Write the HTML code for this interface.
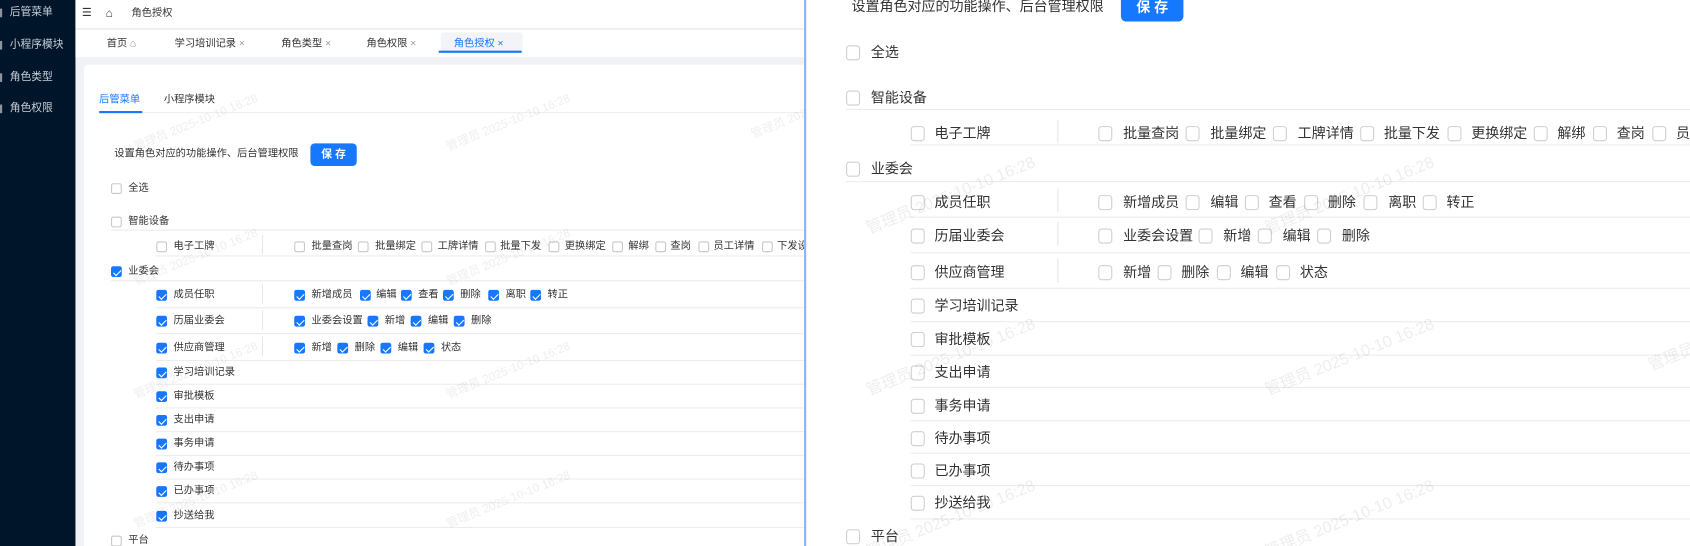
<!DOCTYPE html>
<html><head><meta charset="utf-8">
<style>
*{margin:0;padding:0;box-sizing:border-box}
body{width:1690px;height:546px;overflow:hidden;background:#fff;font-family:"Liberation Sans","Noto Sans CJK SC",sans-serif}
#w{position:absolute;left:0;top:0;width:1568px;height:507px;transform:scale(1.0778);transform-origin:0 0;overflow:hidden}
.a{position:absolute;white-space:nowrap}
#L{position:absolute;left:0;top:0;width:746px;height:507px;overflow:hidden;background:#f0f2f5}
#R{position:absolute;left:746px;top:0;width:822px;height:507px;overflow:hidden;background:#fff;border-left:2px solid #8fb4f5}
.l{font-size:9.5px;line-height:14px;color:#333}
.r{font-size:13px;line-height:18px;color:#333}
.cb{position:absolute;width:10px;height:10px;border:1px solid #c8c8c8;border-radius:2px;background:#fff}
.ck{background:#1677ff;border-color:#1677ff}
.ck:after{content:"";position:absolute;left:2.5px;top:0.5px;width:3px;height:5.5px;border:solid #fff;border-width:0 1.3px 1.3px 0;transform:rotate(45deg)}
.cr{position:absolute;width:13px;height:14px;border:1px solid #cfcfcf;border-radius:3px;background:#fff}
.hl{position:absolute;height:1px;background:#ececec}
.vl{position:absolute;width:1px;background:#e6e6e6}
.wm{position:absolute;color:rgba(0,0,0,0.07);transform:rotate(-22deg);white-space:nowrap;font-size:11px}
.wr{font-size:15px}
.side{font-size:10px;color:#c8ced8;line-height:14px}
</style></head><body><div id="w">
<div id="L">
 <div class="a" style="left:0;top:0;width:70px;height:507px;background:#001529"></div>
 <div class="a side" style="left:9px;top:5px">后管菜单</div>
 <div class="a side" style="left:9px;top:35px">小程序模块</div>
 <div class="a side" style="left:9px;top:65px">角色类型</div>
 <div class="a side" style="left:9px;top:94px">角色权限</div>
 <div class="a" style="left:0;top:8px;width:2px;height:8px;background:#8a93a0"></div>
 <div class="a" style="left:0;top:38px;width:2px;height:8px;background:#8a93a0"></div>
 <div class="a" style="left:0;top:68px;width:2px;height:8px;background:#8a93a0"></div>
 <div class="a" style="left:0;top:97px;width:2px;height:8px;background:#8a93a0"></div>
 <div class="a" style="left:70px;top:0;width:676px;height:27px;background:#fff;border-bottom:1px solid #eee"></div>
 <div class="a l" style="left:76px;top:6px;font-size:10px">☰</div>
 <div class="a l" style="left:98px;top:6px;font-size:11px">⌂</div>
 <div class="a l" style="left:122px;top:6px">角色授权</div>
 <div class="a" style="left:70px;top:28px;width:676px;height:25px;background:#fff"></div>
 <div class="a" style="left:409px;top:30px;width:76px;height:19px;background:#f2f4f7;border-radius:3px 3px 0 0"></div>
 <div class="a" style="left:407px;top:47px;width:77px;height:2px;background:#1677ff"></div>
 <div class="a l" style="left:99px;top:34px">首页 <span style="color:#888">⌂</span></div>
 <div class="a l" style="left:162px;top:34px">学习培训记录 <span style="color:#999">×</span></div>
 <div class="a l" style="left:261px;top:34px">角色类型 <span style="color:#999">×</span></div>
 <div class="a l" style="left:340px;top:34px">角色权限 <span style="color:#999">×</span></div>
 <div class="a l" style="left:421px;top:34px;color:#1677ff">角色授权 <span>×</span></div>
 <div class="a" style="left:78px;top:60px;width:680px;height:460px;background:#fff;border-radius:4px"></div>
 <div class="a l" style="left:92px;top:86px;color:#1677ff">后管菜单</div>
 <div class="a l" style="left:152px;top:86px">小程序模块</div>
 <div class="hl" style="left:92px;top:104px;width:660px;background:#eee"></div>
 <div class="a" style="left:92px;top:103px;width:40px;height:2px;background:#1677ff"></div>
 <div class="a l" style="left:106px;top:136px">设置角色对应的功能操作、后台管理权限</div>
 <div class="a" style="left:288px;top:133px;width:43px;height:21px;background:#1677ff;border-radius:4px;color:#fff;font-size:10px;line-height:21px;text-align:center;font-weight:bold">保 存</div>

 <div class="cb" style="left:103px;top:170px"></div><div class="a l" style="left:119px;top:168px">全选</div>
 <div class="cb" style="left:103px;top:201px"></div><div class="a l" style="left:119px;top:199px">智能设备</div>
 <div class="hl" style="left:103px;top:213px;width:650px"></div>
 <div class="cb" style="left:145px;top:224px"></div><div class="a l" style="left:161px;top:222px">电子工牌</div>
 <div class="vl" style="left:243px;top:218px;height:18px"></div>
 <div class="cb" style="left:273px;top:224px"></div><div class="a l" style="left:289px;top:222px">批量查岗</div>
 <div class="cb" style="left:332px;top:224px"></div><div class="a l" style="left:348px;top:222px">批量绑定</div>
 <div class="cb" style="left:391px;top:224px"></div><div class="a l" style="left:406px;top:222px">工牌详情</div>
 <div class="cb" style="left:450px;top:224px"></div><div class="a l" style="left:464px;top:222px">批量下发</div>
 <div class="cb" style="left:509px;top:224px"></div><div class="a l" style="left:524px;top:222px">更换绑定</div>
 <div class="cb" style="left:568px;top:224px"></div><div class="a l" style="left:583px;top:222px">解绑</div>
 <div class="cb" style="left:608px;top:224px"></div><div class="a l" style="left:622px;top:222px">查岗</div>
 <div class="cb" style="left:648px;top:224px"></div><div class="a l" style="left:662px;top:222px">员工详情</div>
 <div class="cb" style="left:707px;top:224px"></div><div class="a l" style="left:721px;top:222px">下发设置</div>
 <div class="hl" style="left:145px;top:237px;width:610px"></div>
 <div class="cb ck" style="left:103px;top:247px"></div><div class="a l" style="left:119px;top:245px">业委会</div>
 <div class="hl" style="left:103px;top:260px;width:650px"></div>

 <div class="cb ck" style="left:145px;top:269px"></div><div class="a l" style="left:161px;top:267px">成员任职</div>
 <div class="vl" style="left:243px;top:264px;height:18px"></div>
 <div class="cb ck" style="left:273px;top:269px"></div><div class="a l" style="left:289px;top:267px">新增成员</div>
 <div class="cb ck" style="left:334px;top:269px"></div><div class="a l" style="left:349px;top:267px">编辑</div>
 <div class="cb ck" style="left:372px;top:269px"></div><div class="a l" style="left:388px;top:267px">查看</div>
 <div class="cb ck" style="left:411px;top:269px"></div><div class="a l" style="left:427px;top:267px">删除</div>
 <div class="cb ck" style="left:453px;top:269px"></div><div class="a l" style="left:469px;top:267px">离职</div>
 <div class="cb ck" style="left:492px;top:269px"></div><div class="a l" style="left:508px;top:267px">转正</div>
 <div class="hl" style="left:145px;top:285px;width:610px"></div>
 <div class="cb ck" style="left:145px;top:293px"></div><div class="a l" style="left:161px;top:291px">历届业委会</div>
 <div class="vl" style="left:243px;top:288px;height:18px"></div>
 <div class="cb ck" style="left:273px;top:293px"></div><div class="a l" style="left:289px;top:291px">业委会设置</div>
 <div class="cb ck" style="left:341px;top:293px"></div><div class="a l" style="left:357px;top:291px">新增</div>
 <div class="cb ck" style="left:381px;top:293px"></div><div class="a l" style="left:397px;top:291px">编辑</div>
 <div class="cb ck" style="left:421px;top:293px"></div><div class="a l" style="left:437px;top:291px">删除</div>
 <div class="hl" style="left:145px;top:309px;width:610px"></div>
 <div class="cb ck" style="left:145px;top:318px"></div><div class="a l" style="left:161px;top:316px">供应商管理</div>
 <div class="vl" style="left:243px;top:312px;height:18px"></div>
 <div class="cb ck" style="left:273px;top:318px"></div><div class="a l" style="left:289px;top:316px">新增</div>
 <div class="cb ck" style="left:313px;top:318px"></div><div class="a l" style="left:329px;top:316px">删除</div>
 <div class="cb ck" style="left:353px;top:318px"></div><div class="a l" style="left:369px;top:316px">编辑</div>
 <div class="cb ck" style="left:393px;top:318px"></div><div class="a l" style="left:409px;top:316px">状态</div>
 <div class="hl" style="left:145px;top:334px;width:610px"></div>
 <div class="cb ck" style="left:145px;top:341px"></div><div class="a l" style="left:161px;top:339px">学习培训记录</div>
 <div class="hl" style="left:145px;top:356px;width:610px"></div>
 <div class="cb ck" style="left:145px;top:363px"></div><div class="a l" style="left:161px;top:361px">审批模板</div>
 <div class="hl" style="left:145px;top:378px;width:610px"></div>
 <div class="cb ck" style="left:145px;top:385px"></div><div class="a l" style="left:161px;top:383px">支出申请</div>
 <div class="hl" style="left:145px;top:400px;width:610px"></div>
 <div class="cb ck" style="left:145px;top:407px"></div><div class="a l" style="left:161px;top:405px">事务申请</div>
 <div class="hl" style="left:145px;top:422px;width:610px"></div>
 <div class="cb ck" style="left:145px;top:429px"></div><div class="a l" style="left:161px;top:427px">待办事项</div>
 <div class="hl" style="left:145px;top:444px;width:610px"></div>
 <div class="cb ck" style="left:145px;top:451px"></div><div class="a l" style="left:161px;top:449px">已办事项</div>
 <div class="hl" style="left:145px;top:466px;width:610px"></div>
 <div class="cb ck" style="left:145px;top:474px"></div><div class="a l" style="left:161px;top:472px">抄送给我</div>
 <div class="hl" style="left:145px;top:489px;width:610px"></div>
 <div class="cb" style="left:103px;top:497px"></div><div class="a l" style="left:119px;top:495px">平台</div>

 <div class="wm" style="left:120px;top:105px">管理员 2025-10-10 16:28</div>
 <div class="wm" style="left:410px;top:105px">管理员 2025-10-10 16:28</div>
 <div class="wm" style="left:695px;top:105px">管理员 2025</div>
 <div class="wm" style="left:120px;top:335px">管理员 2025-10-10 16:28</div>
 <div class="wm" style="left:410px;top:335px">管理员 2025-10-10 16:28</div>
 <div class="wm" style="left:120px;top:230px">管理员 2025-10-10 16:28</div>
 <div class="wm" style="left:410px;top:230px">管理员 2025-10-10 16:28</div>
 <div class="wm" style="left:120px;top:455px">管理员 2025-10-10 16:28</div>
 <div class="wm" style="left:410px;top:455px">管理员 2025-10-10 16:28</div>
</div>

<div id="R">
 <div class="a r" style="left:42px;top:-3px">设置角色对应的功能操作、后台管理权限</div>
 <div class="a" style="left:292px;top:-8px;width:58px;height:28px;background:#1677ff;border-radius:5px;color:#fff;font-size:13px;line-height:30px;text-align:center;font-weight:bold">保 存</div>

 <div class="cr" style="left:37px;top:42px"></div><div class="a r" style="left:60px;top:40px">全选</div>
 <div class="cr" style="left:37px;top:84px"></div><div class="a r" style="left:60px;top:82px">智能设备</div>
 <div class="hl" style="left:37px;top:101px;width:790px"></div>
 <div class="cr" style="left:97px;top:117px"></div><div class="a r" style="left:119px;top:115px">电子工牌</div>
 <div class="vl" style="left:233px;top:111px;height:22px"></div>
 <div class="cr" style="left:271px;top:117px"></div><div class="a r" style="left:294px;top:115px">批量查岗</div>
 <div class="cr" style="left:352px;top:117px"></div><div class="a r" style="left:375px;top:115px">批量绑定</div>
 <div class="cr" style="left:433px;top:117px"></div><div class="a r" style="left:456px;top:115px">工牌详情</div>
 <div class="cr" style="left:514px;top:117px"></div><div class="a r" style="left:536px;top:115px">批量下发</div>
 <div class="cr" style="left:595px;top:117px"></div><div class="a r" style="left:617px;top:115px">更换绑定</div>
 <div class="cr" style="left:675px;top:117px"></div><div class="a r" style="left:697px;top:115px">解绑</div>
 <div class="cr" style="left:730px;top:117px"></div><div class="a r" style="left:752px;top:115px">查岗</div>
 <div class="cr" style="left:785px;top:117px"></div><div class="a r" style="left:807px;top:115px">员工详情</div>
 <div class="hl" style="left:97px;top:134px;width:730px"></div>
 <div class="cr" style="left:37px;top:150px"></div><div class="a r" style="left:60px;top:148px">业委会</div>
 <div class="hl" style="left:37px;top:168px;width:790px"></div>

 <div class="cr" style="left:97px;top:181px"></div><div class="a r" style="left:119px;top:179px">成员任职</div>
 <div class="vl" style="left:233px;top:175px;height:22px"></div>
 <div class="cr" style="left:271px;top:181px"></div><div class="a r" style="left:294px;top:179px">新增成员</div>
 <div class="cr" style="left:352px;top:181px"></div><div class="a r" style="left:375px;top:179px">编辑</div>
 <div class="cr" style="left:407px;top:181px"></div><div class="a r" style="left:429px;top:179px">查看</div>
 <div class="cr" style="left:462px;top:181px"></div><div class="a r" style="left:484px;top:179px">删除</div>
 <div class="cr" style="left:517px;top:181px"></div><div class="a r" style="left:540px;top:179px">离职</div>
 <div class="cr" style="left:572px;top:181px"></div><div class="a r" style="left:594px;top:179px">转正</div>
 <div class="hl" style="left:97px;top:201px;width:730px"></div>
 <div class="cr" style="left:97px;top:212px"></div><div class="a r" style="left:119px;top:210px">历届业委会</div>
 <div class="vl" style="left:233px;top:206px;height:22px"></div>
 <div class="cr" style="left:271px;top:212px"></div><div class="a r" style="left:294px;top:210px">业委会设置</div>
 <div class="cr" style="left:364px;top:212px"></div><div class="a r" style="left:387px;top:210px">新增</div>
 <div class="cr" style="left:419px;top:212px"></div><div class="a r" style="left:442px;top:210px">编辑</div>
 <div class="cr" style="left:474px;top:212px"></div><div class="a r" style="left:497px;top:210px">删除</div>
 <div class="hl" style="left:97px;top:234px;width:730px"></div>
 <div class="cr" style="left:97px;top:246px"></div><div class="a r" style="left:119px;top:244px">供应商管理</div>
 <div class="vl" style="left:233px;top:240px;height:22px"></div>
 <div class="cr" style="left:271px;top:246px"></div><div class="a r" style="left:294px;top:244px">新增</div>
 <div class="cr" style="left:326px;top:246px"></div><div class="a r" style="left:348px;top:244px">删除</div>
 <div class="cr" style="left:381px;top:246px"></div><div class="a r" style="left:403px;top:244px">编辑</div>
 <div class="cr" style="left:436px;top:246px"></div><div class="a r" style="left:458px;top:244px">状态</div>
 <div class="hl" style="left:97px;top:267px;width:730px"></div>
 <div class="cr" style="left:97px;top:277px"></div><div class="a r" style="left:119px;top:275px">学习培训记录</div>
 <div class="hl" style="left:97px;top:298px;width:730px"></div>
 <div class="cr" style="left:97px;top:308px"></div><div class="a r" style="left:119px;top:306px">审批模板</div>
 <div class="hl" style="left:97px;top:329px;width:730px"></div>
 <div class="cr" style="left:97px;top:339px"></div><div class="a r" style="left:119px;top:337px">支出申请</div>
 <div class="hl" style="left:97px;top:359px;width:730px"></div>
 <div class="cr" style="left:97px;top:370px"></div><div class="a r" style="left:119px;top:368px">事务申请</div>
 <div class="hl" style="left:97px;top:390px;width:730px"></div>
 <div class="cr" style="left:97px;top:400px"></div><div class="a r" style="left:119px;top:398px">待办事项</div>
 <div class="hl" style="left:97px;top:420px;width:730px"></div>
 <div class="cr" style="left:97px;top:430px"></div><div class="a r" style="left:119px;top:428px">已办事项</div>
 <div class="hl" style="left:97px;top:450px;width:730px"></div>
 <div class="cr" style="left:97px;top:460px"></div><div class="a r" style="left:119px;top:458px">抄送给我</div>
 <div class="hl" style="left:97px;top:481px;width:730px"></div>
 <div class="cr" style="left:37px;top:491px"></div><div class="a r" style="left:60px;top:489px">平台</div>

 <div class="wm wr" style="left:50px;top:170px">管理员 2025-10-10 16:28</div>
 <div class="wm wr" style="left:420px;top:170px">管理员 2025-10-10 16:28</div>
 <div class="wm wr" style="left:50px;top:320px">管理员 2025-10-10 16:28</div>
 <div class="wm wr" style="left:420px;top:320px">管理员 2025-10-10 16:28</div>
 <div class="wm wr" style="left:50px;top:470px">管理员 2025-10-10 16:28</div>
 <div class="wm wr" style="left:420px;top:470px">管理员 2025-10-10 16:28</div>
 <div class="wm wr" style="left:780px;top:320px">管理员</div>
</div>
</div></body></html>
